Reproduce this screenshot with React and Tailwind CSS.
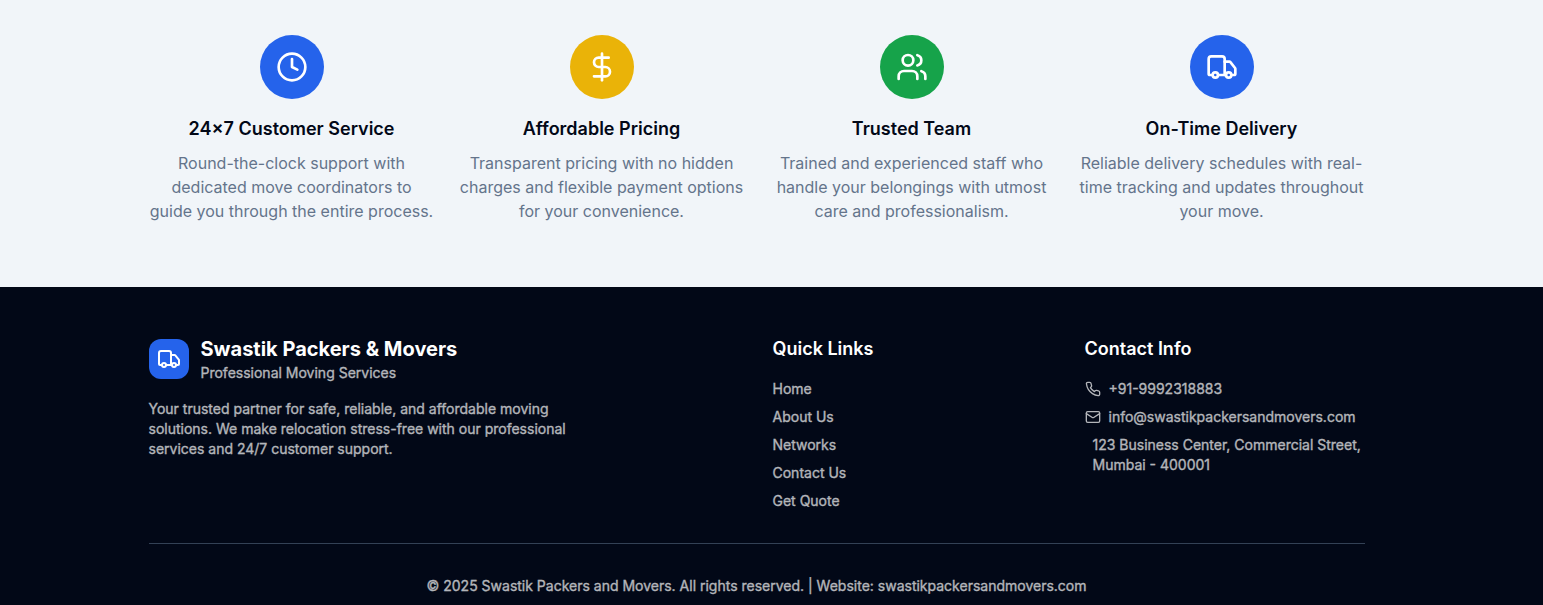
import React from "react";
import { Clock, DollarSign, Users, Truck } from "lucide-react";

const features = [
  { icon: Clock, color: "bg-[#2563eb]", title: "24×7 Customer Service", text: "Round-the-clock support with dedicated move coordinators to guide you through the entire process." },
  { icon: DollarSign, color: "bg-[#eab308]", title: "Affordable Pricing", text: "Transparent pricing with no hidden charges and flexible payment options for your convenience." },
  { icon: Users, color: "bg-[#16a34a]", title: "Trusted Team", text: "Trained and experienced staff who handle your belongings with utmost care and professionalism." },
  { icon: Truck, color: "bg-[#2563eb]", title: "On-Time Delivery", text: "Reliable delivery schedules with real-time tracking and updates throughout your move." },
];

const links = ["Home", "About Us", "Networks", "Contact Us", "Get Quote"];

function PhoneIcon({ className }) {
  return (
    <svg className={className} viewBox="0 0 24 24" fill="none" stroke="currentColor" strokeWidth="2" strokeLinecap="round" strokeLinejoin="round">
      <path d="M22 16.92v3a2 2 0 0 1-2.18 2 19.79 19.79 0 0 1-8.63-3.07 19.5 19.5 0 0 1-6-6 19.79 19.79 0 0 1-3.07-8.67A2 2 0 0 1 4.11 2h3a2 2 0 0 1 2 1.72 12.84 12.84 0 0 0 .7 2.81 2 2 0 0 1-.45 2.11L8.09 9.91a16 16 0 0 0 6 6l1.27-1.27a2 2 0 0 1 2.11-.45 12.84 12.84 0 0 0 2.81.7A2 2 0 0 1 22 16.92z" />
    </svg>
  );
}

function MailIcon({ className }) {
  return (
    <svg className={className} viewBox="0 0 24 24" fill="none" stroke="currentColor" strokeWidth="2" strokeLinecap="round" strokeLinejoin="round">
      <rect width="20" height="16" x="2" y="4" rx="2" />
      <path d="m22 7-8.97 5.7a1.94 1.94 0 0 1-2.06 0L2 7" />
    </svg>
  );
}

export default function App() {
  return (
    <div className="h-[605px] w-full overflow-hidden bg-[#020817] font-['Inter',sans-serif]">
      <section className="h-[287px] bg-[#f1f5f9] pt-[35px]">
        <div className="ml-[148.5px] grid w-[1216px] grid-cols-4 gap-6">
          {features.map(({ icon: Icon, color, title, text }) => (
            <div key={title} className="text-center">
              <div className={`mx-auto mb-4 flex size-16 items-center justify-center rounded-full ${color}`}>
                <Icon className="size-8 text-white" />
              </div>
              <h3 className="mb-2 text-lg font-semibold text-[#020817]">{title}</h3>
              <p className="text-base text-[#64748b]">{text}</p>
            </div>
          ))}
        </div>
      </section>
      <footer className="pt-12 text-white">
        <div className="ml-[148.5px] w-[1216px]">
          <div className="grid grid-cols-4 gap-8">
            <div className="col-span-2">
              <div className="mb-4 flex items-center gap-3">
                <div className="flex size-10 items-center justify-center rounded-xl bg-[#2563eb]">
                  <Truck className="size-6" />
                </div>
                <div>
                  <h3 className="text-xl font-bold">Swastik Packers &amp; Movers</h3>
                  <p className="text-sm opacity-70 [-webkit-text-stroke:0.3px]">Professional Moving Services</p>
                </div>
              </div>
              <p className="max-w-md text-sm opacity-70 [-webkit-text-stroke:0.3px]">
                Your trusted partner for safe, reliable, and affordable moving solutions. We make relocation stress-free with our professional services and 24/7 customer support.
              </p>
            </div>
            <div>
              <h4 className="mb-4 text-lg font-semibold">Quick Links</h4>
              <ul className="space-y-2 text-sm [-webkit-text-stroke:0.3px]">
                {links.map((l) => <li key={l} className="opacity-70">{l}</li>)}
              </ul>
            </div>
            <div>
              <h4 className="mb-4 text-lg font-semibold">Contact Info</h4>
              <div className="space-y-2 text-sm opacity-70 [-webkit-text-stroke:0.3px]">
                <div className="flex items-center gap-2"><PhoneIcon className="size-4" />+91-9992318883</div>
                <div className="flex items-center gap-2"><MailIcon className="size-4" />info@swastikpackersandmovers.com</div>
                <div className="pl-2">123 Business Center, Commercial Street, Mumbai - 400001</div>
              </div>
            </div>
          </div>
          <div className="mt-8 border-t border-[#334155] pt-8 text-center text-sm">
            <p className="opacity-70 [-webkit-text-stroke:0.3px]">© 2025 Swastik Packers and Movers. All rights reserved. | Website: swastikpackersandmovers.com</p>
          </div>
        </div>
      </footer>
    </div>
  );
}
